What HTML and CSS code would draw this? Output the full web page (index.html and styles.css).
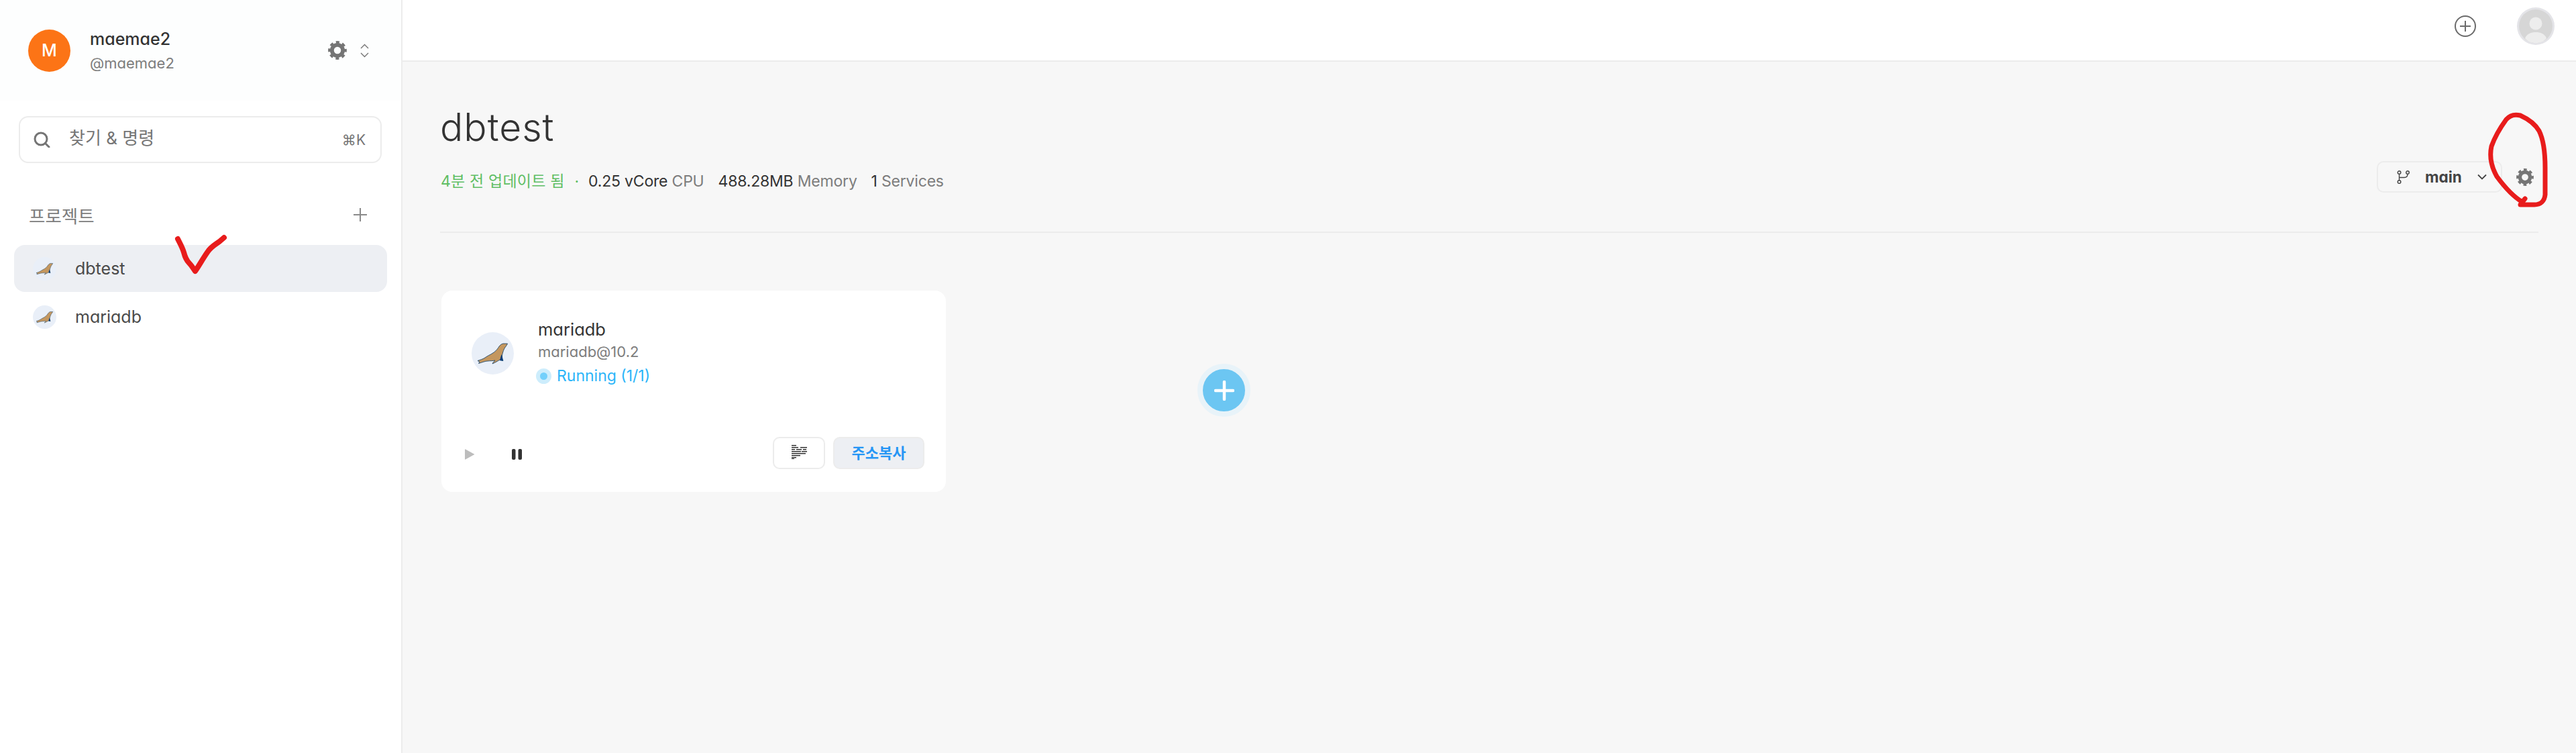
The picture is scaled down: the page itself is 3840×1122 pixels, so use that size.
FILE: index.html
```html
<!DOCTYPE html>
<html lang="ko">
  <head>
    <meta charset="UTF-8"/>
    <title>dbtest</title>
    <link rel="stylesheet" href="styles.css">
  </head>
  <body>
    <svg class="defs" width="0" height="0">
      <symbol id="seal" viewBox="0 0 63 63">
        <path d="M9 42.500 C13 41 16 40.500 20 38 C24 35 28 33.500 31 31.500 C35 29 37 27 39.500 23.500 C41.500 20 44 17.500 47 17 L53.500 17 C52.500 20 50 22 48.500 25 C47 28.500 46 31.500 45.500 35 C45.500 38 46 40.500 47 42.500 L41.500 41.500 C38.500 43 36 45 31 47 C31.500 45 34 43.500 35 42 C31 43 27 42.500 24 43 C20 43 16 45 10.500 46.500 L12 44 Z" fill="#c4975f" stroke="#0f3d66" stroke-width="0.800" stroke-linejoin="round"/>
        <path d="M42 42 L44.500 33 L47 42.500 Z" fill="#003b7a"/>
      </symbol>
      <symbol id="gear" viewBox="0 0 24 24" fill="none" stroke="#757575">
        <circle cx="12" cy="12" r="7" stroke-width="5"/>
        <circle cx="12" cy="12" r="10.200" stroke-width="3.400" stroke-dasharray="4.300 3.710" stroke-dashoffset="2.150"/>
      </symbol>
    </svg>

    <aside class="sidebar">
      <div class="userBox">
        <div class="userBox_avatar">M</div>
        <div class="userBox_text">
          <p class="userBox_name">maemae2</p>
          <p class="userBox_handle">@maemae2</p>
        </div>
        <svg class="userBox_gear"><use href="#gear"/></svg>
        <svg class="userBox_chevrons" viewBox="0 0 13 21" fill="none" stroke="#757575" stroke-width="1.4">
          <path d="M1 7 L6.500 1.500 L12 7"/>
          <path d="M1 14 L6.500 19.500 L12 14"/>
        </svg>
      </div>

      <div class="searchBox">
        <svg class="searchBox_icon" viewBox="0 0 25 24" fill="none" stroke="#757575" stroke-width="3">
          <circle cx="11" cy="11" r="9"/>
          <path d="M17.500 17.500 L23 23" stroke-linecap="round"/>
        </svg>
        <span class="searchBox_text">찾기 &amp; 명령</span>
        <span class="searchBox_key">⌘K</span>
      </div>

      <div class="projectHead">
        <span class="projectHead_title">프로젝트</span>
        <svg class="projectHead_add" viewBox="0 0 20 20" stroke="#8a8a8a" stroke-width="2">
          <path d="M10 0 V20 M0 10 H20"/>
        </svg>
      </div>

      <div class="projectRow projectRow_active">
        <div class="projectRow_icon"><svg><use href="#seal"/></svg></div>
        <span>dbtest</span>
      </div>
      <div class="projectRow">
        <div class="projectRow_icon"><svg><use href="#seal"/></svg></div>
        <span>mariadb</span>
      </div>
    </aside>

    <div class="mainArea">
      <header class="topBar">
        <svg class="topBar_add" viewBox="0 0 32 32" fill="none" stroke="#6b6b6b" stroke-width="2">
          <circle cx="16" cy="16" r="15"/>
          <path d="M16 8 V24 M8 16 H24"/>
        </svg>
        <div class="topBar_avatar">
          <svg viewBox="0 0 50 50">
            <circle cx="25" cy="25" r="25" fill="#d6d6d6"/>
            <circle cx="25" cy="21" r="9.500" fill="#ededed"/>
            <path d="M9 43 C12 36 18 34 25 34 C32 34 38 36 41 43 C37 48 31 50 25 50 C19 50 13 48 9 43 Z" fill="#ededed"/>
          </svg>
        </div>
      </header>

      <main class="content">
        <div class="pageHead">
          <div>
            <h1 class="pageHead_title">dbtest</h1>
            <p class="metaRow">
              <span class="metaRow_updated">4분 전 업데이트 됨</span>
              <span class="metaRow_dot">·</span>
              <span class="metaRow_stat"><b>0.25 vCore</b> CPU</span>
              <span class="metaRow_stat"><b>488.28MB</b> Memory</span>
              <span class="metaRow_stat"><b>1</b> Services</span>
            </p>
          </div>
          <div class="pageHead_right">
            <div class="branchSelect">
              <svg class="branchSelect_icon" viewBox="0 0 20 20" fill="none" stroke="#444" stroke-width="1.400">
                <circle cx="3.500" cy="3" r="2.300"/>
                <circle cx="3.500" cy="17" r="2.300"/>
                <circle cx="16" cy="3" r="2.300"/>
                <path d="M3.500 5.300 V14.700 M3.500 10.500 H11 C14 10.500 16 9 16 5.300"/>
              </svg>
              <span class="branchSelect_name">main</span>
              <svg class="branchSelect_arrow" viewBox="0 0 14 9" fill="none" stroke="#444" stroke-width="1.800">
                <path d="M1 1.500 L7 7.500 L13 1.500"/>
              </svg>
            </div>
            <svg class="pageHead_gear"><use href="#gear"/></svg>
          </div>
        </div>

        <div class="canvas">
          <div class="serviceCard">
            <div class="serviceCard_top">
              <div class="serviceCard_icon"><svg><use href="#seal"/></svg></div>
              <div>
                <p class="serviceCard_name">mariadb</p>
                <p class="serviceCard_image">mariadb@10.2</p>
                <p class="serviceCard_status"><span class="statusDot"></span>Running (1/1)</p>
              </div>
            </div>
            <div class="serviceCard_bottom">
              <div class="serviceCard_controls">
                <svg class="playIcon" viewBox="0 0 15 16"><path d="M0 1 Q0 0 1 0.500 L14.500 8 L1 15.500 Q0 16 0 15 Z" fill="#bdbdbd"/></svg>
                <svg class="pauseIcon" viewBox="0 0 15 16" fill="#333">
                  <rect x="0" y="0" width="5.500" height="16" rx="2"/>
                  <rect x="9.500" y="0" width="5.500" height="16" rx="2"/>
                </svg>
              </div>
              <div class="serviceCard_buttons">
                <button class="iconBtn">
                  <svg viewBox="0 0 23 21" fill="#333">
                    <rect x="0" y="0" width="7" height="1.500"/>
                    <rect x="0" y="3" width="10" height="1.500"/><rect x="13" y="3" width="10" height="1.500"/>
                    <rect x="0" y="6" width="5" height="1.500"/><rect x="7" y="6" width="8" height="1.500"/><rect x="17" y="6" width="5" height="1.500"/>
                    <rect x="0" y="9" width="14" height="1.500"/><rect x="15" y="9" width="8" height="1.500"/>
                    <rect x="0" y="12" width="21" height="1.500"/>
                    <rect x="0" y="15" width="13" height="1.500"/>
                    <rect x="0" y="18" width="7" height="1.500"/>
                    <rect x="0" y="20" width="4" height="1"/>
                  </svg>
                </button>
                <button class="copyBtn">주소복사</button>
              </div>
            </div>
          </div>
          <div class="addService">
            <svg viewBox="0 0 30 30" stroke="#fff" stroke-width="4.500" stroke-linecap="round">
              <path d="M15 2 V28 M2 15 H28"/>
            </svg>
          </div>
        </div>
      </main>
    </div>

    <!-- red pen marks drawn over the screenshot -->
    <svg class="penMarks" viewBox="0 0 3840 1122" fill="none" stroke="#e81c1c" stroke-linecap="round" stroke-linejoin="round">
      <path stroke-width="8" d="M265 356 C269 364 272 369 274 376 C276 384 278 388 282 392 C286 396 288 400 291 404 C296 397 302 386 309 376 C314 368 320 365 327 360 L334 354"/>
      <path stroke-width="7" d="M3764 296 L3760 301 C3745 292 3733 278 3722 263 C3713 247 3711 232 3714 218 C3719 204 3728 189 3736 178 C3742 171 3749 170 3757 172 C3768 177 3778 183 3785 195 C3792 209 3794 226 3794 250 L3794 290 C3793 300 3787 305 3778 305 L3757 305"/>
    </svg>
  </body>
</html>
```

FILE: styles.css
```css
* {
  box-sizing: border-box;
}

html, body {
  margin: 0;
  height: 100%;
}

body {
  display: flex;
  overflow: hidden;
  background-color: rgb(247, 247, 247);
  font-family: "Inter", "Noto Sans CJK KR", sans-serif;
  font-feature-settings: "cv11";
  color: rgb(51, 51, 51);
}

p, h1 {
  margin: 0;
  font-weight: 400;
}

.defs {
  position: absolute;
}

/* sidebar */

.sidebar {
  width: 600px;
  flex-shrink: 0;
  background-color: #fff;
  border-right: 2px solid rgb(236, 236, 236);
}

.userBox {
  display: flex;
  align-items: center;
  height: 150px;
  padding: 0 48px 0 42px;
  background-color: rgb(253, 254, 254);
}
  .userBox_avatar {
    width: 63px;
    height: 63px;
    border-radius: 50%;
    background-color: rgb(252, 116, 22);
    color: #fff;
    font-size: 25px;
    font-weight: 500;
    display: flex;
    justify-content: center;
    align-items: center;
  }
  .userBox_text {
    margin-left: 29px;
    flex: 1;
  }
  .userBox_name {
    font-size: 25px;
    font-weight: 500;
    line-height: 38px;
  }
  .userBox_handle {
    font-size: 22px;
    line-height: 34px;
    color: rgb(125, 125, 125);
  }
  .userBox_gear {
    width: 28px;
    height: 28px;
  }
  .userBox_chevrons {
    width: 13px;
    height: 21px;
    margin-left: 20px;
  }

.searchBox {
  display: flex;
  align-items: center;
  height: 70px;
  margin: 23px 29px 0 28px;
  padding: 0 22px 0 20px;
  background-color: #fff;
  border: 2px solid rgb(236, 236, 236);
  border-radius: 14px;
  color: rgb(117, 117, 117);
}
  .searchBox_icon {
    width: 25px;
    height: 24px;
  }
  .searchBox_text {
    margin-left: 28px;
    flex: 1;
    font-size: 26px;
    line-height: 30px;
    padding-bottom: 4px;
  }
  .searchBox_key {
    font-size: 21px;
  }

.projectHead {
  display: flex;
  justify-content: space-between;
  align-items: center;
  height: 30px;
  margin-top: 62px;
  padding: 0 51px 0 43px;
}
  .projectHead_title {
    font-size: 26.500px;
    color: rgb(125, 125, 125);
  }
  .projectHead_add {
    width: 20px;
    height: 20px;
  }

.projectRow {
  display: flex;
  align-items: center;
  gap: 28px;
  height: 70px;
  margin: 0 21px 2px 21px;
  padding-left: 28px;
  border-radius: 16px;
  font-size: 25px;
  color: rgb(74, 74, 74);
}
.projectHead + .projectRow {
  margin-top: 30px;
}
.projectRow_active {
  background-color: rgb(237, 239, 243);
}
  .projectRow_icon {
    width: 35px;
    height: 35px;
    border-radius: 50%;
    background-color: rgb(233, 239, 248);
  }
  .projectRow_icon svg {
    display: block;
    width: 35px;
    height: 35px;
  }

/* main */

.mainArea {
  flex: 1;
  min-width: 0;
}

.topBar {
  display: flex;
  justify-content: flex-end;
  align-items: center;
  gap: 61px;
  height: 92px;
  padding: 12px 32px 24px 0;
  background-color: #fff;
  border-bottom: 2px solid rgb(236, 236, 236);
}
  .topBar_add {
    width: 32px;
    height: 32px;
  }
  .topBar_avatar {
    width: 56px;
    height: 56px;
    padding: 3px;
    border-radius: 50%;
    background-color: rgb(228, 228, 232);
  }
  .topBar_avatar svg {
    display: block;
    width: 50px;
    height: 50px;
  }

.content {
  padding: 0 56px 0 56px;
}

.pageHead {
  display: flex;
  justify-content: space-between;
  padding: 64px 7px 58px 0;
  border-bottom: 2px solid rgb(236, 236, 236);
}
  .pageHead_title {
    font-size: 57px;
    font-weight: 300;
    letter-spacing: 1px;
    line-height: 68px;
    color: rgb(51, 51, 51);
  }
  .pageHead_right {
    display: flex;
    align-items: center;
    gap: 21px;
    align-self: flex-start;
    margin-top: 84px;
  }
  .pageHead_gear {
    width: 26px;
    height: 26px;
  }

.metaRow {
  display: flex;
  align-items: center;
  margin-top: 30px;
  padding-left: 1px;
  font-size: 23px;
  letter-spacing: -0.200px;
  line-height: 32px;
  color: rgb(125, 125, 125);
}
  .metaRow_updated {
    letter-spacing: 0.200px;
    color: rgb(95, 190, 100);
  }
  .metaRow_dot {
    margin: 0 14px 0 15px;
    color: rgb(95, 190, 100);
  }
  .metaRow_stat {
    margin-right: 21px;
  }
  .metaRow_stat b {
    font-weight: 400;
    color: rgb(51, 51, 51);
  }

.branchSelect {
  display: flex;
  align-items: center;
  width: 187px;
  height: 47px;
  padding-left: 28px;
  border: 2px solid rgb(236, 236, 236);
  border-radius: 10px;
}
  .branchSelect_icon {
    width: 20px;
    height: 20px;
  }
  .branchSelect_name {
    margin-left: 22px;
    font-size: 22.500px;
    font-weight: 700;
    color: rgb(68, 68, 68);
  }
  .branchSelect_arrow {
    width: 14px;
    height: 9px;
    margin-left: 23px;
  }

.canvas {
  display: flex;
  align-items: flex-start;
  gap: 375px;
  margin-top: 86px;
  padding-left: 2px;
}

.serviceCard {
  display: flex;
  flex-direction: column;
  justify-content: space-between;
  width: 752px;
  height: 300px;
  padding: 41px 32px 34px 35px;
  background-color: #fff;
  border-radius: 16px;
}
  .serviceCard_top {
    display: flex;
    gap: 36px;
    margin-left: 10px;
  }
  .serviceCard_icon {
    width: 63px;
    height: 63px;
    margin-top: 21px;
    border-radius: 50%;
    background-color: rgb(233, 239, 248);
  }
  .serviceCard_icon svg {
    display: block;
    width: 63px;
    height: 63px;
  }
  .serviceCard_name {
    font-size: 25.500px;
    line-height: 34px;
  }
  .serviceCard_image {
    font-size: 22px;
    line-height: 32px;
    color: rgb(125, 125, 125);
  }
  .serviceCard_status {
    display: flex;
    align-items: center;
    gap: 8px;
    margin: 4px 0 0 -3px;
    font-size: 23px;
    line-height: 32px;
    color: rgb(43, 181, 249);
  }
  .statusDot {
    width: 23px;
    height: 23px;
    border-radius: 50%;
    background-color: rgb(115, 208, 251);
    border: 6px solid rgb(205, 237, 252);
  }
  .serviceCard_bottom {
    display: flex;
    justify-content: space-between;
    align-items: center;
  }
  .serviceCard_controls {
    display: flex;
    gap: 55px;
    padding-top: 4px;
  }
  .playIcon, .pauseIcon {
    width: 15px;
    height: 16px;
  }
  .serviceCard_buttons {
    display: flex;
    gap: 12px;
  }

.iconBtn, .copyBtn {
  height: 48px;
  border: 2px solid rgb(236, 236, 236);
  border-radius: 10px;
  padding: 0;
  font-family: inherit;
}
.iconBtn {
  width: 78px;
  background-color: #fff;
}
  .iconBtn svg {
    display: block;
    width: 23px;
    height: 21px;
    margin: -3px auto 0 auto;
  }
.copyBtn {
  width: 136px;
  padding-bottom: 4px;
  background-color: rgb(237, 239, 243);
  color: rgb(38, 150, 245);
  font-size: 22px;
  font-weight: 600;
}

.addService {
  display: flex;
  justify-content: center;
  align-items: center;
  width: 79px;
  height: 79px;
  margin-top: 109px;
  border-radius: 50%;
  background-color: rgb(108, 198, 242);
  border: 8px solid rgb(232, 243, 249);
}
  .addService svg {
    width: 30px;
    height: 30px;
  }

.penMarks {
  position: absolute;
  top: 0;
  left: 0;
  width: 3840px;
  height: 1122px;
  pointer-events: none;
}
```
